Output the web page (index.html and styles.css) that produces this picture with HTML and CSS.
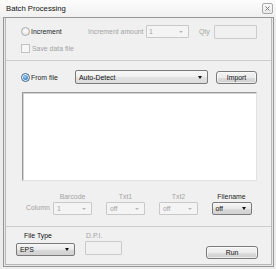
FILE: index.html
```html
<!DOCTYPE html>
<html>
<head>
<meta charset="utf-8">
<link rel="stylesheet" href="styles.css">
</head>
<body>
<div class="window">
  <div class="titlebar">
    <span class="title">Batch Processing</span>
    <span class="close"><svg width="5" height="5" viewBox="0 0 5 5"><path d="M0.5 0.5L4.5 4.5M4.5 0.5L0.5 4.5" stroke="#7a7a7a" stroke-width="1"/></svg></span>
  </div>
  <div class="frame">
    <div class="inner">
      <section class="sec sec-inc">
        <div class="row row-inc">
          <span class="opt opt-inc"><span class="radio"></span><span class="opt-text">Increment</span></span>
          <span class="lbl dis lbl-amt">Increment amount</span>
          <span class="select disabled sel-amt"><span>1</span><i class="arrow"></i></span>
          <span class="lbl dis lbl-qty">Qty</span>
          <span class="input inp-qty"></span>
        </div>
        <div class="row row-save">
          <span class="check"></span><span class="dis">Save data file</span>
        </div>
      </section>
      <section class="sec sec-file">
        <div class="row row-file">
          <span class="opt opt-file"><span class="radio on"><span class="dot"></span></span><span class="opt-text">From file</span></span>
          <span class="select sel-auto"><span>Auto-Detect</span><i class="arrow"></i></span>
          <span class="btn btn-import">Import</span>
        </div>
        <div class="textarea"></div>
        <div class="cols">
          <span class="col-title dis">Column</span>
          <div class="col">
            <span class="col-lbl dis">Barcode</span>
            <span class="select disabled sel-col"><span>1</span><i class="arrow"></i></span>
          </div>
          <div class="col">
            <span class="col-lbl dis">Txt1</span>
            <span class="select disabled sel-col"><span>off</span><i class="arrow"></i></span>
          </div>
          <div class="col">
            <span class="col-lbl dis">Txt2</span>
            <span class="select disabled sel-col"><span>off</span><i class="arrow"></i></span>
          </div>
          <div class="col">
            <span class="col-lbl">Filename</span>
            <span class="select sel-col"><span>off</span><i class="arrow"></i></span>
          </div>
        </div>
      </section>
      <section class="sec sec-out">
        <div class="field ft">
          <span class="f-lbl ft-lbl">File Type</span>
          <span class="select sel-eps"><span>EPS</span><i class="arrow"></i></span>
        </div>
        <div class="field dpi">
          <span class="f-lbl dis dpi-lbl">D.P.I.</span>
          <span class="input inp-dpi"></span>
        </div>
        <span class="btn btn-run">Run</span>
      </section>
    </div>
  </div>
</div>
</body>
</html>
```
FILE: styles.css
```css
* { box-sizing: border-box; margin: 0; padding: 0; }
html, body { width: 276px; height: 269px; overflow: hidden; }
body {
  background: #ececec;
  font-family: "Liberation Sans", Arial, sans-serif;
  font-size: 6.9px;
  color: #1e1e1e;
}
.window { width: 276px; height: 269px; display: flex; flex-direction: column; }

.titlebar {
  height: 17px;
  flex: none;
  display: flex;
  align-items: center;
  justify-content: space-between;
  padding: 0 3px 0 6px;
  background: linear-gradient(#fcfcfc, #f1f1f1);
}
.title { font-size: 7.7px; color: #111; }
.close {
  width: 11px; height: 11px;
  border: 1px solid #a8a8a8;
  border-radius: 2px;
  background: linear-gradient(#fbfbfb, #e8e8e8);
  display: flex; align-items: center; justify-content: center;
}

.frame {
  flex: none;
  margin: 0 2px 0 3px;
  height: 250px;
  border: 1px solid #969696;
  padding: 0 1px 1px 1px;
  background: #e8e8e8;
}
.inner {
  height: 100%;
  border: 1px solid #b8b8b8;
  border-top: none;
  background: #f0f0f0;
  display: flex;
  flex-direction: column;
}

.sec { flex: none; }
.sec-inc { height: 43px; padding: 6px 0 0 15px; border-bottom: 1px solid #cdcdcd; }
.sec-file { height: 166px; padding: 9px 0 0 15px; border-bottom: 1px solid #cdcdcd; }
.sec-out { height: 37px; display: flex; align-items: flex-start; padding: 4px 13px 0 10px; }

.row { display: flex; align-items: center; }
.row-inc { height: 15px; }
.row-save { height: 9px; margin-top: 5px; }
.row-file { height: 14px; }

.dis { color: #a3a3a3; }

.opt { display: flex; align-items: center; }
.opt-inc { width: 67px; }
.opt-file { width: 54px; }
.opt-text { margin-left: 1px; }

.radio {
  width: 9px; height: 9px;
  border-radius: 50%;
  border: 1px solid #ababab;
  background: radial-gradient(circle at 50% 40%, #fdfdfd, #dcdcdc);
  display: flex; align-items: center; justify-content: center;
}
.radio.on { border-color: #3b6c98; background: radial-gradient(circle at 50% 40%, #ffffff, #d6e2ee); }
.dot {
  width: 5px; height: 5px; border-radius: 50%;
  background: radial-gradient(circle at 40% 35%, #9fd0f5, #1f63a6);
}

.check {
  width: 9px; height: 9px;
  border: 1px solid #c2c2c2;
  background: #f6f6f6;
  margin-right: 2px;
}

.lbl-amt { width: 58px; }
.lbl-qty { width: 15px; margin-left: 10px; }

.select {
  height: 13px;
  display: flex;
  align-items: center;
  justify-content: space-between;
  padding: 0 5px 0 3px;
  border: 1px solid #7a7a7a;
  border-radius: 2px;
  background: linear-gradient(#f7f7f7, #e9e9e9 50%, #dadada 51%, #d2d2d2);
  color: #111;
}
.arrow {
  width: 0; height: 0;
  border-left: 2.5px solid transparent;
  border-right: 2.5px solid transparent;
  border-top: 3px solid #111;
}
.select.disabled {
  border-color: #c9c9c9;
  border-radius: 1px;
  background: #f4f4f4;
  color: #a3a3a3;
}
.select.disabled .arrow {
  border-left-width: 2px; border-right-width: 2px; border-top-width: 2px;
  border-top-color: #b5b5b5;
}
.sel-amt { width: 43px; padding-left: 2px; }
.sel-auto { width: 133px; height: 14px; background: linear-gradient(#f9f9f9, #efefef 50%, #e3e3e3 51%, #dcdcdc); }

.input {
  display: block;
  border: 1px solid #cbcbcb;
  border-radius: 1px;
  background: #f0f0f0;
}
.inp-qty { width: 43px; height: 14px; }

.btn {
  display: flex; align-items: center; justify-content: center;
  height: 13px;
  border: 1px solid #7a7a7a;
  border-radius: 3px;
  background: linear-gradient(#f3f3f3, #ebebeb 50%, #dddddd 51%, #cfcfcf);
  color: #111;
  box-shadow: inset 0 0 0 1px rgba(255,255,255,0.6);
}
.btn-import { width: 41px; margin-left: 8px; }

.textarea {
  margin: 8px 0 0 1px;
  width: 235px; height: 89px;
  background: #fff;
  border: 1px solid;
  border-color: #9c9c9c #e2e2e2 #e2e2e2 #9c9c9c;
  box-shadow: inset 1px 1px 0 #d2d2d2;
}

.cols { display: flex; margin-top: 11px; padding-left: 5px; }
.col-title { width: 27px; align-self: flex-end; line-height: 9px; margin-bottom: 3px; }
.col { width: 39px; display: flex; flex-direction: column; align-items: center; }
.col + .col { margin-left: 14px; }
.col-lbl { line-height: 9px; height: 9px; }
.sel-col { width: 39px; margin-top: 1px; }
.col:last-child .sel-col { width: 40px; }

.field { display: flex; flex-direction: column; }
.ft { width: 59px; }
.f-lbl { line-height: 9px; height: 9px; }
.ft-lbl { margin-left: 8px; color: #111; }
.sel-eps { width: 59px; margin-top: 3px; }
.dpi { margin-left: 10px; }
.dpi-lbl { margin-left: 1px; }
.inp-dpi { width: 37px; height: 14px; margin-top: 1px; }

.btn-run { width: 52px; margin-left: auto; margin-top: 15px; }
```
